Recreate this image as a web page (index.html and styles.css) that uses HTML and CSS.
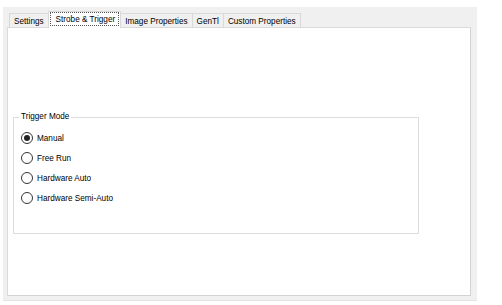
FILE: index.html
```html
<!DOCTYPE html>
<html>
<head>
    <meta charset="utf-8">
    <title>Camera Properties</title>
    <link rel="stylesheet" href="styles.css">
</head>
<body>
    <div class="frame">
        <div class="tabs">
            <div class="tab">Settings</div>
            <div class="tab selected"><span class="focus">Strobe &amp; Trigger</span></div>
            <div class="tab">Image Properties</div>
            <div class="tab">GenTl</div>
            <div class="tab">Custom Properties</div>
        </div>
        <div class="page">
            <fieldset class="group">
                <legend>Trigger Mode</legend>
                <label class="radio"><span class="dot checked"></span>Manual</label>
                <label class="radio"><span class="dot"></span>Free Run</label>
                <label class="radio"><span class="dot"></span>Hardware Auto</label>
                <label class="radio"><span class="dot"></span>Hardware Semi-Auto</label>
            </fieldset>
        </div>
    </div>
</body>
</html>
```
FILE: styles.css
```css
body {
    margin: 0;
    background: #fff;
    font-family: "Liberation Sans", Arial, sans-serif;
    font-size: 8.2px;
    color: #000;
}
.frame {
    margin: 7px 0 0 3px;
    width: 474px;
    height: 294px;
    box-sizing: border-box;
    padding: 5px 6px 4px 4px;
    background: #f0f0f0;
    border-bottom: 1px solid #e4e4e4;
    display: flex;
    flex-direction: column;
}
.tabs {
    display: flex;
    align-items: flex-end;
    height: 15px;
    padding-left: 2px;
}
.tab {
    height: 13px;
    line-height: 15px;
    padding: 0 4px;
    border: 1px solid #d9d9d9;
    border-bottom: none;
    margin-left: -1px;
    background: #f0f0f0;
    white-space: nowrap;
}
.tab:first-child {
    margin-left: 0;
}
.tab.selected {
    position: relative;
    z-index: 1;
    height: 16px;
    margin-bottom: -1px;
    padding: 0 1px;
    background: #fff;
    line-height: 14px;
}
.focus {
    display: inline-block;
    height: 12px;
    line-height: 13px;
    padding: 0 3px 0 5px;
    border: 1px dotted #555;
}
.page {
    flex: 1;
    background: #fff;
    border: 1px solid #dadada;
    border-right-color: #d2d2d2;
    border-bottom-color: #d2d2d2;
    padding: 0 0 0 5px;
}
.group {
    margin: 84px 0 0 0;
    width: 406px;
    height: 122px;
    box-sizing: border-box;
    padding: 0 0 0 7px;
    border: 1px solid #dcdcdc;
    display: flex;
    flex-direction: column;
}
.group legend {
    padding: 0 2px;
    margin-left: -2px;
    line-height: 10px;
    margin-bottom: 6px;
}
.radio {
    display: flex;
    align-items: center;
    gap: 4px;
    height: 20px;
}
.dot {
    width: 10px;
    height: 10px;
    border: 1px solid #333;
    border-radius: 50%;
    display: flex;
    align-items: center;
    justify-content: center;
}
.dot.checked::after {
    content: "";
    width: 6px;
    height: 6px;
    border-radius: 50%;
    background: #222;
}
```
